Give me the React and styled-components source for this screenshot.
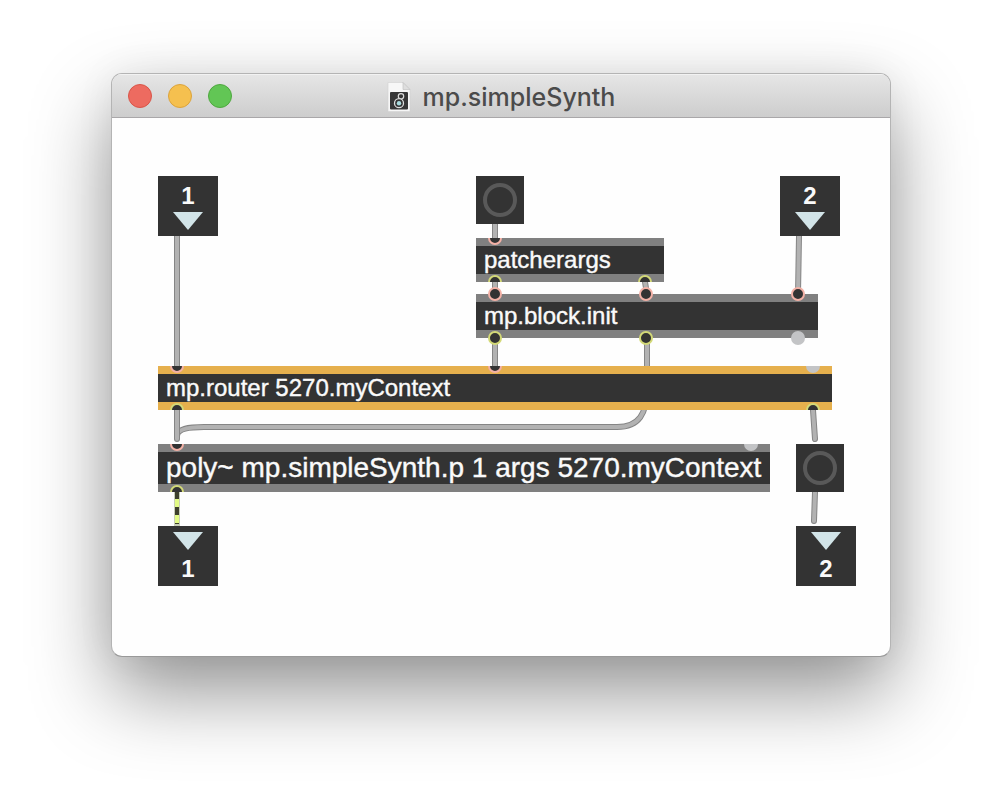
import React from "react";
import styled, { createGlobalStyle } from "styled-components";

const GlobalStyle = createGlobalStyle`
  * { box-sizing: border-box; }
  body { margin: 0; background: #fff; }
`;

const Desktop = styled.main`
  padding: 73px 111px 145px;
  overflow: hidden;
`;

const Window = styled.section`
  border: 1px solid #b4b4b4;
  border-bottom-color: #999;
  border-radius: 11px;
  overflow: hidden;
  background: #fefefe;
  box-shadow: 0 36px 80px 0 rgba(0, 0, 0, 0.42), 0 0 40px rgba(0, 0, 0, 0.06);
`;

const TitleBar = styled.header`
  display: grid;
  grid-template-columns: 1fr auto 1fr;
  align-items: center;
  height: 44px;
  padding: 0 16px;
  border-bottom: 1px solid #a9a7a9;
  background: linear-gradient(#e6e6e6, #cdcdcd);
  box-shadow: inset 0 1px 0 #f2f2f2;
`;

const Lights = styled.div`
  display: flex;
  gap: 16px;
`;

const Light = styled.button`
  width: 24px;
  height: 24px;
  padding: 0;
  border: 1px solid ${(p) => p.$edge};
  border-radius: 50%;
  background: ${(p) => p.$fill};
`;

const Title = styled.h1`
  display: flex;
  align-items: center;
  gap: 12px;
  margin: 0;
  padding-top: 2px;
  color: #4b4b4b;
  font: 500 25px/32px Inter, "Liberation Sans", sans-serif;
`;

const Canvas = styled.div`
  position: relative;
  height: 538px;
`;

const Wires = styled.svg`
  position: absolute;
  inset: 0;
  width: 100%;
  height: 100%;
`;

const Ports = styled(Wires)`
  pointer-events: none;
`;

const Node = styled.div`
  position: absolute;
  left: ${(p) => p.$x}px;
  top: ${(p) => p.$y}px;
`;

const ObjectBox = styled(Node)`
  width: ${(p) => p.$w}px;
  padding: 0 8px;
  border: solid ${(p) => (p.$active ? "#e6b04d" : "#808080")};
  border-width: 8px 0;
  background: #333;
  color: #fafafa;
  font-family: "Liberation Sans", Arial, sans-serif;
  font-size: ${(p) => (p.$large ? 28 : 24)}px;
  line-height: ${(p) => (p.$large ? 32 : 28)}px;
  white-space: nowrap;
  -webkit-text-stroke: 0.4px #fafafa;
`;

const Terminal = styled(Node)`
  display: flex;
  flex-direction: ${(p) => (p.$out ? "column-reverse" : "column")};
  align-items: center;
  justify-content: space-between;
  width: 60px;
  height: 60px;
  padding: ${(p) => (p.$out ? "6px 0 3px" : "6px 0")};
  background: #333;
  color: #fafafa;
  font: 700 24px/28px "Liberation Sans", Arial, sans-serif;
`;

const BangButton = styled(Node)`
  display: grid;
  place-items: center;
  width: 48px;
  height: 48px;
  padding: 0;
  border: 0;
  background: #333;
`;

const WIRES = [
  "M65 118V248",
  "M383 106V120",
  "M687 118L686 176",
  "M383 164V176",
  "M533 164L535 176",
  "M383 220V248",
  "M535 220V270C535 296 527 309 505 309H92C76 309 65 311 65 318",
  "M65 292V321",
  "M701 292L703 321",
  "M703 374L702 403",
];

const PORT_COLORS = { in: "#f3b1a6", out: "#d3d977" };

const PORTS = [
  { x: 383, y: 120, kind: "in", half: "bottom" },
  { x: 383, y: 164, kind: "out", half: "top" },
  { x: 533, y: 164, kind: "out", half: "top" },
  { x: 383, y: 176, kind: "in" },
  { x: 534, y: 176, kind: "in" },
  { x: 686, y: 176, kind: "in" },
  { x: 383, y: 220, kind: "out" },
  { x: 534, y: 220, kind: "out" },
  { x: 686, y: 220, kind: "idle" },
  { x: 65, y: 248, kind: "in", half: "bottom" },
  { x: 383, y: 248, kind: "in", half: "bottom" },
  { x: 701, y: 248, kind: "idle", half: "bottom" },
  { x: 65, y: 292, kind: "out", half: "top" },
  { x: 701, y: 292, kind: "out", half: "top" },
  { x: 65, y: 326, kind: "in", half: "bottom" },
  { x: 639, y: 326, kind: "idle", half: "bottom" },
  { x: 65, y: 374, kind: "out", half: "top" },
];

function arc(x, y, r, half) {
  const sweep = half === "top" ? 1 : 0;
  return `M${x - r} ${y}A${r} ${r} 0 0 ${sweep} ${x + r} ${y}`;
}

function Port({ x, y, kind, half }) {
  if (kind === "idle") {
    return half ? <path d={arc(x, y, 7, half)} fill="#c3c4c6" /> : <circle cx={x} cy={y} r="7" fill="#c3c4c6" />;
  }
  const paint = { fill: "#333", stroke: PORT_COLORS[kind], strokeWidth: 2 };
  return half ? <path d={arc(x, y, 6, half)} {...paint} /> : <circle cx={x} cy={y} r="6" {...paint} />;
}

function Triangle() {
  return (
    <svg width="30" height="18" viewBox="0 0 30 18" aria-hidden="true">
      <path d="M0 0H30L15 18Z" fill="#d2e4e8" />
    </svg>
  );
}

function InOut({ x, y, n, out }) {
  return (
    <Terminal $x={x} $y={y} $out={out}>
      <span>{n}</span>
      <Triangle />
    </Terminal>
  );
}

function Bang({ x, y }) {
  return (
    <BangButton as="button" $x={x} $y={y} type="button" aria-label="Bang">
      <svg width="34" height="34" aria-hidden="true">
        <circle cx="17" cy="17" r="15" fill="none" stroke="#595959" strokeWidth="4" />
      </svg>
    </BangButton>
  );
}

function FileIcon() {
  return (
    <svg width="24" height="30" viewBox="0 0 24 30" aria-hidden="true">
      <path d="M1 .5H16L23 7.500V29.500H1Z" fill="#f7f7f7" stroke="#d2d2d2" strokeWidth=".6" />
      <path d="M16 .5V7.500H23Z" fill="#dedede" stroke="#bcbcbc" strokeWidth=".6" />
      <rect x="3" y="10" width="18" height="17.500" rx="1" fill="#363636" />
      <circle cx="14" cy="14.300" r="2.700" fill="none" stroke="#ddd" strokeWidth="1.200" />
      <circle cx="12" cy="21.200" r="4.500" fill="#333" stroke="#ddd" strokeWidth="1.300" />
      <circle cx="12" cy="21.200" r="2.200" fill="#a9dcdf" />
    </svg>
  );
}

export default function App() {
  return (
    <>
      <GlobalStyle />
      <Desktop>
        <Window>
          <TitleBar>
            <Lights>
              <Light type="button" aria-label="Close" $fill="#ed6b60" $edge="#d85548" />
              <Light type="button" aria-label="Minimize" $fill="#f5c04f" $edge="#dba33c" />
              <Light type="button" aria-label="Zoom" $fill="#62c655" $edge="#4fa73f" />
            </Lights>
            <Title>
              <FileIcon />
              mp.simpleSynth
            </Title>
          </TitleBar>
          <Canvas>
            <Wires aria-hidden="true">
              {WIRES.map((d) => (
                <g key={d} fill="none" strokeLinecap="round">
                  <path d={d} stroke="#858585" strokeWidth="6" />
                  <path d={d} stroke="#b2b2b2" strokeWidth="4" />
                </g>
              ))}
              <path d="M65 374V408" stroke="#c8cdb8" strokeWidth="6" />
              <path d="M65 374V406" stroke="#e2fb84" strokeWidth="4" />
              <path d="M65 373V406" stroke="#3d402c" strokeWidth="4" strokeDasharray="8 8" />
            </Wires>
            <InOut x={46} y={58} n="1" />
            <Bang x={364} y={58} />
            <InOut x={668} y={58} n="2" />
            <ObjectBox $x={364} $y={120} $w={188}>patcherargs</ObjectBox>
            <ObjectBox $x={364} $y={176} $w={342}>mp.block.init</ObjectBox>
            <ObjectBox $x={46} $y={248} $w={674} $active>mp.router 5270.myContext</ObjectBox>
            <ObjectBox $x={46} $y={326} $w={612} $large>poly~ mp.simpleSynth.p 1 args 5270.myContext</ObjectBox>
            <Bang x={684} y={326} />
            <InOut x={46} y={408} n="1" out />
            <InOut x={684} y={408} n="2" out />
            <Ports aria-hidden="true">
              {PORTS.map((p) => (
                <Port key={`${p.x}-${p.y}`} {...p} />
              ))}
            </Ports>
          </Canvas>
        </Window>
      </Desktop>
    </>
  );
}
